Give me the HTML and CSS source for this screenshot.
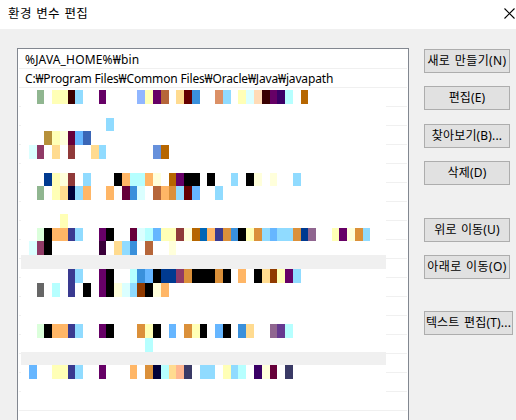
FILE: index.html
```
<!DOCTYPE html>
<html lang="ko">
<head>
<meta charset="utf-8">
<title>환경 변수 편집</title>
<link rel="stylesheet" href="styles.css">
</head>
<body>
<header class="titlebar">
  <span class="title">환경 변수 편집</span>
  <svg class="close" width="11" height="11" viewBox="0 0 11 11"><path d="M.5.5l10 10M10.5.5l-10 10" stroke="#000" stroke-width="1.1" fill="none"/></svg>
</header>
<main class="content">
  <div class="list">
    <div class="row"><span class="home">%JAVA_HOME%₩bin</span></div>
    <div class="row"><span class="path">C:₩Program Files₩Common Files₩Oracle₩Java₩javapath</span></div>
    <div class="rest">
      <div class="mosaic" id="mosaic"></div>
    </div>
  </div>
  <nav class="actions">
    <button class="btn new">새로 만들기(N)</button>
    <button class="btn edit">편집(E)</button>
    <button class="btn browse">찾아보기(B)...</button>
    <button class="btn delete">삭제(D)</button>
    <button class="btn up">위로 이동(U)</button>
    <button class="btn down">아래로 이동(O)</button>
    <button class="btn text">텍스트 편집(T)...</button>
  </nav>
</main>
<script src="mosaic.js"></script>
</body>
</html>
```
FILE: styles.css
```
* { box-sizing: border-box; }
body {
  margin: 0;
  width: 516px;
  height: 420px;
  overflow: hidden;
  background: #f0f0f0;
  color: #000;
  font: 12px/20px "Noto Sans", "Noto Sans CJK KR", sans-serif;
}
.titlebar {
  height: 29px;
  padding: 0 1px 3px 8px;
  background: #fff;
  display: flex;
  align-items: center;
  justify-content: space-between;
}
.title {
  font-family: "Noto Sans CJK KR", sans-serif;
  font-size: 12.5px;
  letter-spacing: 0.4px;
  word-spacing: 0.5px;
  white-space: nowrap;
}
.content {
  display: flex;
  gap: 15px;
  padding: 19px 0 0 17px;
}
.list {
  width: 392px;
  height: 380px;
  border: 1px solid #828790;
  background: #fff;
  padding: 1px;
}
.row {
  height: 19px;
  padding-left: 6px;
  border-bottom: 1px solid #f0f0f0;
  white-space: nowrap;
}
.home { letter-spacing: 0.16px; }
.path { letter-spacing: -0.16px; }
.rest {
  height: 340px;
  padding: 2px 0 0 2px;
  background: repeating-linear-gradient(#fff 0 18px, #f0f0f0 18px 19px);
}
.mosaic {
  display: grid;
  width: 365px;
  height: 303px;
  background: #fff;
}
.band { background: #f0f0f0; }
.actions {
  display: flex;
  flex-direction: column;
  align-items: flex-start;
  padding-top: 1px;
}
.btn {
  width: 86px;
  height: 24px;
  margin: 0 0 13px;
  padding: 0 0 1px;
  border: 1px solid #adadad;
  background: #e1e1e1;
  color: #000;
  font: 12px/18px "Noto Sans", "Noto Sans CJK KR", sans-serif;
  letter-spacing: 0.15px;
  word-spacing: 1px;
  white-space: nowrap;
  display: flex;
  align-items: center;
  justify-content: center;
}
.new, .down { letter-spacing: 0.4px; }
.edit { margin-bottom: 14px; }
.delete { margin-bottom: 33px; }
.down { margin-bottom: 32px; }
.text { width: 89px; letter-spacing: 0.2px; }
```
FILE: mosaic.js
```
const xs = [21,29,37,44,52,60,68,75,83,91,99,106,114,122,130,137,145,153,161,169,176,184,192,200,207,215,223,231,238,246,254,262,270,277,285,293,301,308,316,324,332,339,347,355,363,370,378,386];
const ys = [90,104,118,131,145,159,173,186,200,214,228,241,255,269,283,297,310,324,338,352,365,379,393];
const tracks = a => a.slice(1).map((v, i) => v - a[i] + 'px').join(' ');
const rows = {
  0: '2:90b690 4:ffffb6 5:ffffb6 6:3a0000 7:90dbff 10:660066 15:90b6ff 16:ffffb6 17:660066 18:b6663a 20:ffdb90 21:660000 22:3a90db 25:db9066 26:90dbff 28:ffffb6 29:dbffff 30:ffdbb6 31:3a0000 32:660066 33:3a0066 34:b6ffff 36:b66600',
  2: '11:90dbff',
  3: '3:b6903a 4:ffffb6 5:ffffdb 6:66003a 7:66b6ff 8:3a66b6',
  4: '1:dbffff 2:903a66 4:ffdb90 6:903a3a 9:ffdb90 10:90dbff 17:6690db 18:b66600',
  6: '3:003a90 4:ffffb6 5:ffffdb 6:903a3a 8:90dbff 12:000000 13:ffb666 14:b6ffff 15:b6ffff 16:ffb666 17:ffffdb 19:b66600 20:660066 21:000000 22:000000 24:000000 27:90dbff 29:000000 30:ffffdb 32:ffffdb 35:90dbff',
  7: '2:90b690 4:ffffb6 5:ffdb90 6:00003a 7:90dbff 8:ffb666 11:ffb666 13:66003a 14:3a90db 15:dbffff 17:b6663a 18:ffb666 19:db903a 20:90dbff 21:660000 22:66b6ff 25:90dbff',
  9: '5:ffffb6',
  10: '2:dbffdb 3:000000 4:ffb666 5:ffb666 6:3a3a90 7:90dbff 10:660066 11:000000 14:66003a 15:dbffff 16:b6ffff 17:66b6ff 18:ffffb6 19:ffffb6 20:903a3a 21:ffffdb 22:b66600 23:0066b6 24:ffb666 25:3a3a90 26:db903a 27:3a90db 28:000000 29:ffffb6 30:db903a 31:90dbff 32:66b6ff 33:90dbff 34:90dbff 35:db903a 36:003a90 37:906690 40:ffffb6 41:660066 42:ffffdb 43:db903a 44:90dbff',
  11: '1:dbffff 2:903a66 3:000000 10:3a003a 12:ffdb90 13:90dbff 14:3a90db 16:b6663a 19:ffffdb',
  13: '6:3a3a90 7:90dbff 10:660066 11:000000 14:b6ffff 15:3a90db 16:66b6ff 17:000000 18:003a90 19:003a90 20:903a66 21:db903a 22:000000 23:000000 24:000000 25:db903a 26:000000 28:ffb666 30:000000 31:ffdb90 32:903a00 33:ffffb6 34:660066 35:90dbff',
  14: '2:666666 4:b6ffff 6:3a3a90 8:000000 10:660066 11:000000 12:ffffdb 13:dbffff 14:90dbff 15:903a00 16:000000 17:ffffdb 18:ffb666',
  17: '2:dbffdb 3:000000 4:ffb666 5:ffb666 6:3a3a90 7:90dbff 10:660066 11:000000 15:db903a 16:ffffb6 17:000000 19:66b6ff 21:db903a 22:ffffb6 23:000000 25:66b6ff 26:000000 28:3a90db 29:ffdb90 32:906690 33:663a90 34:b6ffff',
  18: '16:b6ffff',
  20: '1:66b6ff 4:ffffb6 5:ffffb6 6:3a3a90 7:90dbff 10:660066 14:ffb666 16:db903a 17:00003a 18:b6ffff 19:ffdb90 20:ffb690 21:3a3a66 23:90dbff 24:90dbff 26:ffffb6 27:90dbff 28:b6ffff 30:3a0066 31:ffffdb 32:66003a 34:3a3a66'
};
const mosaic = document.getElementById('mosaic');
mosaic.style.gridTemplateColumns = tracks(xs);
mosaic.style.gridTemplateRows = tracks(ys);
function add(area, color) {
  const cell = document.createElement('i');
  cell.style.gridArea = area;
  if (color) cell.style.background = color;
  else cell.className = 'band';
  mosaic.append(cell);
}
for (const [r, cells] of Object.entries(rows)) {
  for (const c of cells.split(' ')) {
    const [col, color] = c.split(':');
    add(`${+r + 1} / ${+col + 1}`, '#' + color);
  }
}
for (const r of [12, 19]) add(`${r + 1} / 1 / ${r + 2} / -1`);
```
